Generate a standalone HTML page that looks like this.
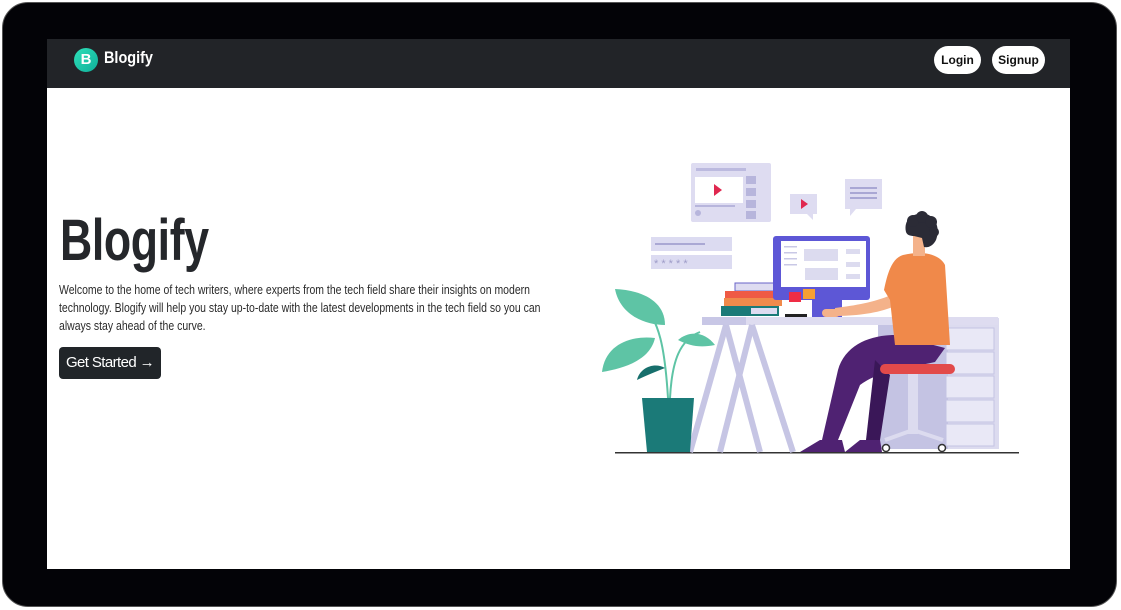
<!DOCTYPE html>
<html><head><meta charset="utf-8"><style>
*{margin:0;padding:0;box-sizing:border-box}
html,body{width:1121px;height:610px;background:#fff;overflow:hidden;font-family:"Liberation Sans",sans-serif}
.frame{position:absolute;left:2px;top:2px;width:1115px;height:605px;background:#030307;border-radius:26px;border:1px solid #555}
.screen{position:absolute;left:47px;top:39px;width:1023px;height:530px;background:#fff}
.nav{position:absolute;left:0;top:0;width:1023px;height:49px;background:#222428}
.logo{position:absolute;left:27px;top:9px;width:24px;height:24px;border-radius:50%;background:linear-gradient(135deg,#2ee0b8,#0fae9a);color:#fff;font-weight:bold;font-size:15px;text-align:center;line-height:24px}
.brand{position:absolute;left:57px;top:9px;color:#fff;font-weight:bold;font-size:17px;transform:scaleX(.85);transform-origin:left}
.btn{position:absolute;top:7px;height:28px;background:#fff;border-radius:14px;font-size:12px;font-weight:bold;color:#111;line-height:28px;text-align:center}
h1{position:absolute;left:13px;top:168px;font-size:58px;font-weight:bold;color:#25272b;transform:scaleX(.77);transform-origin:left;letter-spacing:-.5px}
.p{position:absolute;left:12px;top:242px;font-size:13px;line-height:18px;color:#2b2b2b;white-space:nowrap;transform:scaleX(.805);transform-origin:left}
.gs{position:absolute;left:12px;top:308px;width:102px;height:32px;background:#212529;border-radius:4px;color:#fff;font-size:15px;line-height:32px;text-align:center;letter-spacing:-.6px}
svg{position:absolute;left:0;top:0}
</style></head><body>
<div class="frame"></div>
<div class="screen">
 <div class="nav">
  <div class="logo">B</div><div class="brand">Blogify</div>
  <div class="btn" style="left:887px;width:47px">Login</div>
  <div class="btn" style="left:945px;width:53px">Signup</div>
 </div>
 <h1>Blogify</h1>
 <div class="p">Welcome to the home of tech writers, where experts from the tech field share their insights on modern<br>technology. Blogify will help you stay up-to-date with the latest developments in the tech field so you can<br>always stay ahead of the curve.</div>
 <div class="gs">Get Started →</div>
</div>
<svg width="1121" height="610">
 <rect x="691" y="163" width="80" height="59" rx="2" fill="#dedcf1"/>
 <rect x="695" y="177" width="48" height="26" fill="#fff"/>
 <polygon points="714,184 714,196 722,190" fill="#e0274f"/>
 <rect x="696" y="168" width="50" height="3" fill="#bcbadf"/>
 <g fill="#b7b5dc"><rect x="746" y="176" width="10" height="8"/><rect x="746" y="188" width="10" height="8"/><rect x="746" y="200" width="10" height="8"/><rect x="746" y="211" width="10" height="8"/><rect x="695" y="205" width="40" height="2"/><circle cx="698" cy="213" r="3"/></g>
 <rect x="790" y="194" width="27" height="20" fill="#dedcf1"/><polygon points="807,214 813,214 813,220" fill="#dedcf1"/>
 <polygon points="801,199 801,209 808,204" fill="#e0274f"/>
 <rect x="845" y="179" width="37" height="30" fill="#dedcf1"/><polygon points="850,209 856,209 850,216" fill="#dedcf1"/>
 <g fill="#a9a7d4"><rect x="850" y="187" width="27" height="2"/><rect x="850" y="192" width="27" height="2"/><rect x="850" y="197" width="27" height="2"/></g>
 <rect x="651" y="237" width="81" height="14" fill="#dcdbf1"/><rect x="655" y="243" width="50" height="2" fill="#aaa8d4"/>
 <rect x="651" y="255" width="81" height="14" fill="#dcdbf1"/>
 <text x="654" y="267" font-size="11" fill="#9e9cc8" font-family="Liberation Sans">* * * * *</text>
 <rect x="615" y="452" width="404" height="1.5" fill="#333"/>
 <rect x="878" y="318" width="121" height="131" fill="#dcdbef"/>
 <rect x="878" y="318" width="70" height="131" fill="#c4c3e3"/>
 <g fill="#e9e8f6" stroke="#c4c3e3"><rect x="946" y="328" width="48" height="22"/><rect x="946" y="352" width="48" height="22"/><rect x="946" y="376" width="48" height="22"/><rect x="946" y="400" width="48" height="22"/><rect x="946" y="424" width="48" height="22"/></g>
 <rect x="702" y="317" width="296" height="8" fill="#dedcf0"/>
 <rect x="702" y="317" width="44" height="8" fill="#c8c7e6"/>
 <g stroke="#c6c5e4" stroke-width="6"><line x1="726" y1="325" x2="690" y2="452"/><line x1="726" y1="325" x2="760" y2="452"/><line x1="752" y1="325" x2="720" y2="452"/><line x1="752" y1="325" x2="793" y2="452"/></g>
 <path d="M668 398 C665 350 660 320 640 300" stroke="#5ec4a5" stroke-width="2" fill="none"/>
 <path d="M670 398 C672 360 680 340 700 332" stroke="#5ec4a5" stroke-width="2" fill="none"/>
 <path d="M615 289 C640 290 665 300 665 325 C645 325 620 315 615 289Z" fill="#5ec4a5"/>
 <path d="M602 372 C605 345 630 335 655 338 C650 360 625 368 602 372Z" fill="#5ec4a5"/>
 <path d="M678 340 C690 330 705 332 715 345 C700 348 690 346 678 340Z" fill="#5ec4a5"/>
 <path d="M637 380 C640 367 655 362 665 368 C655 372 645 376 637 380Z" fill="#176f6c"/>
 <path d="M642 398 H694 L690 452 H647Z" fill="#1b7a78"/>
 <rect x="735" y="283" width="40" height="8" fill="#dedcf1" stroke="#6863c8"/>
 <rect x="725" y="291" width="55" height="7" fill="#ef5a45"/>
 <rect x="724" y="298" width="58" height="8" fill="#f08a4b"/>
 <rect x="721" y="306" width="58" height="10" fill="#1b7a78"/>
 <rect x="751" y="308" width="26" height="6" fill="#dedcf1"/>
 <rect x="773" y="236" width="97" height="64" rx="3" fill="#5d57d6"/>
 <rect x="781" y="241" width="85" height="46" fill="#fff"/>
 <g fill="#dcdbef"><rect x="804" y="249" width="34" height="12"/><rect x="805" y="268" width="33" height="12"/><rect x="846" y="249" width="14" height="5"/><rect x="846" y="262" width="14" height="5"/><rect x="846" y="274" width="14" height="5"/></g>
 <g fill="#c9c8e6"><rect x="784" y="246" width="13" height="1.5"/><rect x="784" y="252" width="13" height="1.5"/><rect x="784" y="258" width="13" height="1.5"/><rect x="784" y="264" width="13" height="1.5"/></g>
 <rect x="812" y="298" width="30" height="19" fill="#5d57d6"/>
 <rect x="789" y="292" width="12" height="10" fill="#ef2d45"/><rect x="803" y="289" width="12" height="10" fill="#f5a032"/>
 <rect x="785" y="314" width="22" height="3" fill="#222"/>
 <path d="M895 335 C870 335 845 345 838 370 L822 440 H838 L860 385 C880 370 910 368 935 362 L945 348Z" fill="#4f2272"/>
 <path d="M875 360 L866 440 H880 L890 375Z" fill="#3a1758"/>
 <path d="M820 440 H842 L845 452 H800Z" fill="#4f2272"/>
 <path d="M860 440 H880 L882 452 H845Z" fill="#4f2272"/>
 <rect x="880" y="364" width="75" height="10" rx="5" fill="#e24a4a"/>
 <rect x="908" y="374" width="10" height="60" fill="#dcdbef"/>
 <path d="M885 440 L913 430 L943 440" stroke="#dcdbef" stroke-width="4" fill="none"/>
 <circle cx="886" cy="448" r="3.5" fill="#fff" stroke="#333" stroke-width="1.5"/><circle cx="942" cy="448" r="3.5" fill="#fff" stroke="#333" stroke-width="1.5"/>
 <path d="M835 308 C860 305 885 300 900 290 L905 300 C890 312 860 316 835 316Z" fill="#f4b28a"/>
 <rect x="822" y="309" width="18" height="8" rx="4" fill="#f4b28a"/>
 <path d="M903 255 C925 250 940 255 945 265 L950 345 L895 345 L890 300 L884 290 C888 270 893 258 903 255Z" fill="#f0894a"/>
 <rect x="913" y="236" width="12" height="20" fill="#f4b28a"/>
 <path d="M906 232 C903 218 915 212 926 214 C937 217 940 230 936 240 C933 246 928 248 924 247 L922 238 L914 236 C910 236 907 235 906 232Z" fill="#2b2b36"/>
 <g fill="#2b2b36"><circle cx="913" cy="221" r="6"/><circle cx="922" cy="217" r="6"/><circle cx="931" cy="222" r="6"/><circle cx="934" cy="232" r="5"/></g>
</svg>
</body></html>
